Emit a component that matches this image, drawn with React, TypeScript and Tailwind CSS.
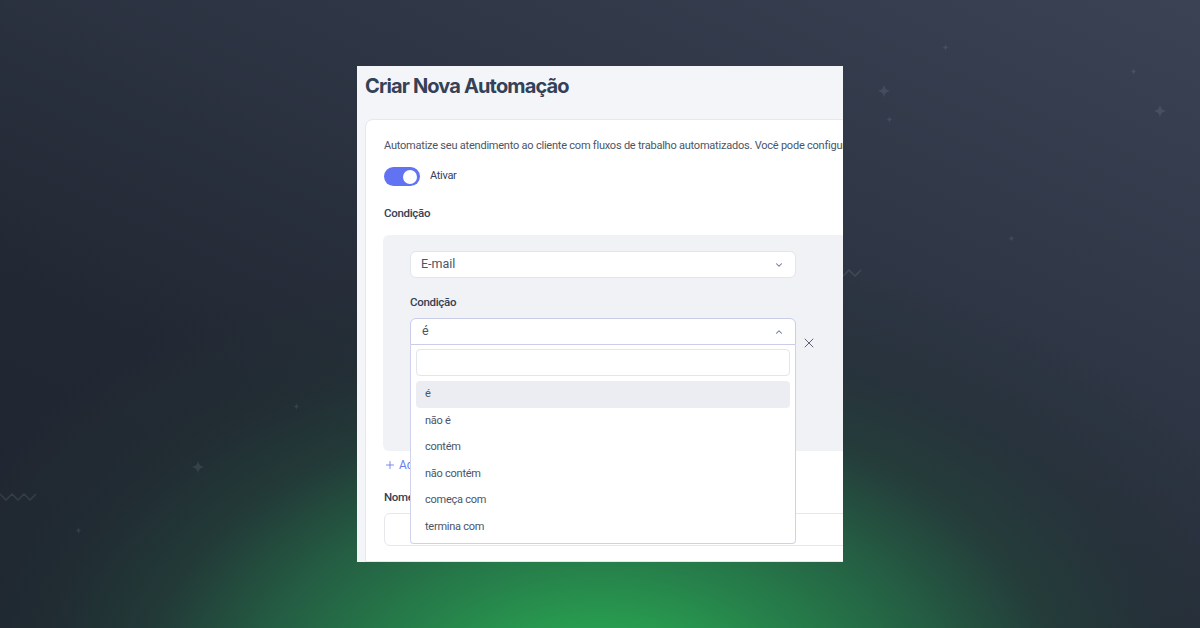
import {ChevronDown, ChevronUp, Plus, X} from "lucide-react";

const options = ["é", "não é", "contém", "não contém", "começa com", "termina com"];

// faint sparkles on the backdrop
const stars = [
    {x: 945, y: 47, s: 7},
    {x: 884, y: 91, s: 14},
    {x: 889, y: 119, s: 7},
    {x: 1133, y: 71, s: 7},
    {x: 1160, y: 111, s: 14},
    {x: 1011, y: 238, s: 7},
    {x: 296, y: 406, s: 7},
    {x: 198, y: 467, s: 14},
    {x: 78, y: 530, s: 7},
];

function Sparkle({x, y, s}: {x: number; y: number; s: number}) {
    return (
        <svg
            className="absolute"
            style={{left: x - s / 2, top: y - s / 2}}
            width={s}
            height={s}
            viewBox="0 0 20 20"
        >
            <path d="M10 0 C11 7 13 9 20 10 C13 11 11 13 10 20 C9 13 7 11 0 10 C7 9 9 7 10 0 Z" fill="rgba(255,255,255,0.09)"/>
        </svg>
    );
}

function Backdrop() {
    return (
        <>
            {stars.map((st, i) => <Sparkle key={i} {...st}/>)}
            <svg className="absolute left-0 top-[490px]" width="40" height="14" viewBox="0 0 40 14">
                <polyline points="0,4 6,10 12,4 18,10 24,4 30,10 36,4" fill="none" stroke="rgba(255,255,255,0.1)" strokeWidth="1.5"/>
            </svg>
            <svg className="absolute left-[843px] top-[266px]" width="20" height="12" viewBox="0 0 20 12">
                <polyline points="0,10 6,4 12,10 18,4" fill="none" stroke="rgba(255,255,255,0.1)" strokeWidth="1.5"/>
            </svg>
        </>
    );
}

export default function App() {
    return (
        <div className="relative w-[1200px] h-[628px] overflow-hidden font-['Roboto','Noto_Sans',sans-serif] bg-[radial-gradient(ellipse_720px_460px_at_600px_700px,#2aaa54_0%,#28a050_14%,#267f4a_30%,#245d43_48%,rgba(35,66,58,0.7)_64%,rgba(33,52,52,0.35)_80%,rgba(30,40,45,0)_100%),linear-gradient(205deg,#3b4254_0%,#2d3443_38%,#222833_70%,#1f2530_100%)]">
            <Backdrop/>

            <div className="relative flex justify-center pt-[66px]">
                <div className="w-[486px] h-[496px] overflow-hidden bg-[#f4f5f9] flex flex-col">
                    <h1 className="pl-[8px] pt-[6px] font-['Inter',sans-serif] text-[20px] leading-[28px] font-bold tracking-[-0.85px] text-[#344157]">
                        Criar Nova Automação
                    </h1>

                    <div className="mt-[19px] ml-[8px] w-[600px] flex-1 bg-white border border-[#e6e8ee] rounded-tl-lg pl-[18px] pt-[17px] flex flex-col">
                        <p className="text-[11px] leading-[18px] tracking-[-0.22px] text-[#4a5568] whitespace-nowrap">
                            Automatize seu atendimento ao cliente com fluxos de trabalho automatizados. Você pode configurar regras e ações.
                        </p>

                        <div className="mt-[12px] flex items-center">
                            <div className="w-[36px] h-[19px] rounded-full bg-[#6172f3] flex items-center justify-end pr-[3px]">
                                <div className="w-[14px] h-[14px] rounded-full bg-white"/>
                            </div>
                            <span className="ml-[10px] text-[11px] tracking-[-0.3px] text-[#334155]">Ativar</span>
                        </div>

                        <div className="mt-[19px] text-[11.5px] leading-[16px] font-medium tracking-[-0.3px] text-[#334155]">Condição</div>

                        <div className="mt-[14px] -ml-[1px] h-[216px] bg-[#f1f2f6] rounded-md pl-[27px] pt-[16px] flex flex-col">
                            <div className="w-[386px] h-[27px] bg-white border border-[#e2e5ec] rounded-md flex items-center justify-between pl-[10px] pr-[11px]">
                                <span className="text-[12.5px] text-[#4a5568]">E-mail</span>
                                <ChevronDown size={10} strokeWidth={2.5} className="text-[#64748b]"/>
                            </div>

                            <div className="mt-[16px] text-[11.5px] leading-[16px] font-medium tracking-[-0.3px] text-[#334155]">Condição</div>

                            <div className="mt-[8px] flex items-start">
                                <div className="relative w-[386px]">
                                    <div className="h-[27px] bg-white border border-[#c9cde8] rounded-t-md flex items-center justify-between pl-[11px] pr-[11px]">
                                        <span className="text-[12.5px] text-[#4a5568]">é</span>
                                        <ChevronUp size={10} strokeWidth={2.5} className="text-[#64748b]"/>
                                    </div>
                                    <div className="absolute left-0 top-[27px] z-10 w-[386px] h-[199px] bg-white border border-t-0 border-[#cfd2ea] rounded-b-[4px] px-[5px] pt-[4px] flex flex-col">
                                        <div className="h-[27px] border border-[#e2e5ec] rounded-[4px] bg-white"/>
                                        <div className="mt-[5px] flex flex-col">
                                            {options.map((o, i) => (
                                                <div
                                                    key={o}
                                                    className={
                                                        "h-[26.5px] flex items-center pl-[9px] text-[11px] tracking-[-0.25px] text-[#4a5568] rounded-[4px] " +
                                                        (i === 0 ? "bg-[#ecedf2]" : "")
                                                    }
                                                >
                                                    {o}
                                                </div>
                                            ))}
                                        </div>
                                    </div>
                                </div>
                                <X size={16} strokeWidth={1.5} className="ml-[5px] mt-[17px] text-[#5b6478]"/>
                            </div>
                        </div>

                        <div className="mt-[6px] flex items-center gap-[3px] text-[12px] leading-[16px] text-[#6b7cf5]">
                            <Plus size={12} strokeWidth={1.8}/>
                            <span>Adicionar condição</span>
                        </div>

                        <div className="mt-[16px] text-[11.5px] leading-[16px] font-medium tracking-[-0.3px] text-[#334155]">Nome da automação</div>

                        <div className="mt-[8px] h-[33px] w-full border border-[#e5e7eb] rounded-md bg-white"/>
                    </div>
                </div>
            </div>
        </div>
    );
}
